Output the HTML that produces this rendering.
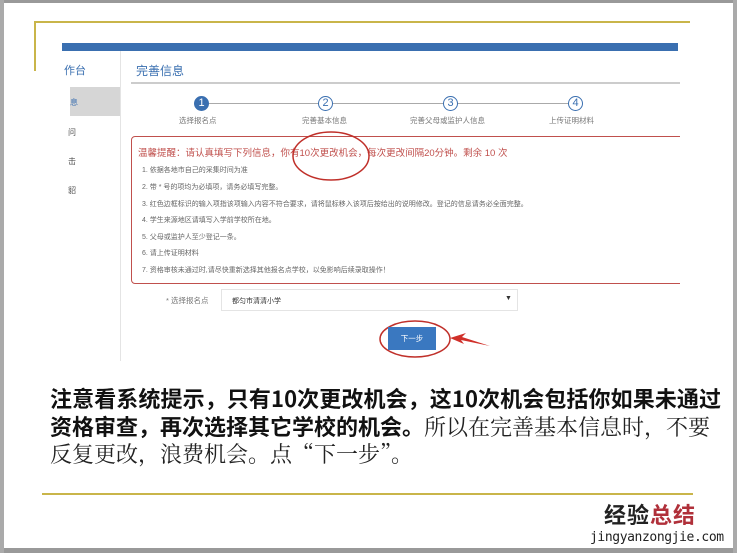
<!DOCTYPE html>
<html><head><meta charset="utf-8"><style>
*{margin:0;padding:0;box-sizing:border-box}
body{width:737px;height:553px;position:relative;background:#fff;overflow:hidden;font-family:"Liberation Sans","Noto Sans CJK SC",sans-serif}
.a{position:absolute}
.s{font-size:7px;color:#666;white-space:nowrap}
.c{width:15px;height:15px;border-radius:50%;border:1px solid #3a6fb0;color:#3a6fb0;font-size:11px;line-height:13px;text-align:center;background:#fff}
.l{font-size:7.5px;color:#777;white-space:nowrap}
.t{font-size:22px;line-height:28px;white-space:nowrap;color:#111}
</style></head><body>
<div class="a" style="left:0;top:0;width:737px;height:3px;background:#999"></div>
<div class="a" style="left:0;top:548px;width:737px;height:5px;background:#999"></div>
<div class="a" style="left:0;top:0;width:4px;height:553px;background:#aaa"></div>
<div class="a" style="left:733px;top:0;width:4px;height:553px;background:#aaa"></div>
<div class="a" style="left:34px;top:21px;width:656px;height:2px;background:#c9b54a"></div>
<div class="a" style="left:34px;top:21px;width:2px;height:50px;background:#c9b54a"></div>

<div class="a" style="left:62px;top:43px;width:616px;height:8px;background:#3a6fb0"></div>
<div class="a" style="left:120px;top:51px;width:1px;height:310px;background:#e4e4e4"></div>
<div class="a" style="left:70px;top:87px;width:50px;height:29px;background:#d6d6d6"></div>
<div class="a" style="left:64px;top:62px;font-size:11px;color:#3a6fb0">作台</div>
<div class="a" style="left:70px;top:97px;font-size:8px;color:#3a6fb0">息</div>
<div class="a" style="left:68px;top:127px;font-size:8px;color:#555">问</div>
<div class="a" style="left:68px;top:156px;font-size:8px;color:#555">击</div>
<div class="a" style="left:68px;top:185px;font-size:8px;color:#555">貂</div>
<div class="a" style="left:136px;top:62px;font-size:12px;color:#3a6fb0">完善信息</div>
<div class="a" style="left:131px;top:82px;width:549px;height:2px;background:#ccc"></div>

<div class="a" style="left:201px;top:103px;width:375px;height:1px;background:#aaa"></div>
<div class="a c" style="left:194px;top:96px;background:#3a6fb0;color:#fff">1</div>
<div class="a c" style="left:318px;top:96px">2</div>
<div class="a c" style="left:443px;top:96px">3</div>
<div class="a c" style="left:568px;top:96px">4</div>
<div class="a l" style="left:179px;top:115px">选择报名点</div>
<div class="a l" style="left:302px;top:115px">完善基本信息</div>
<div class="a l" style="left:410px;top:115px">完善父母或监护人信息</div>
<div class="a l" style="left:549px;top:115px">上传证明材料</div>

<div class="a" style="left:131px;top:136px;width:560px;height:148px;border:1px solid #c0504d;border-radius:4px"></div>
<div class="a" style="left:680px;top:130px;width:20px;height:160px;background:#fff"></div>
<div class="a" style="left:138px;top:145px;font-size:9.5px;color:#c0504d;white-space:nowrap">温馨提醒：请认真填写下列信息，你有10次更改机会，每次更改间隔20分钟。剩余 10 次</div>
<div class="a s" style="left:142px;top:165px">1. 依据各地市自己的采集时间为准</div>
<div class="a s" style="left:142px;top:182px">2. 带 * 号的项均为必填项，请务必填写完整。</div>
<div class="a s" style="left:142px;top:199px">3. 红色边框标识的输入项指该项输入内容不符合要求，请将鼠标移入该项后按给出的说明修改。登记的信息请务必全面完整。</div>
<div class="a s" style="left:142px;top:215px">4. 学生来源地区请填写入学前学校所在地。</div>
<div class="a s" style="left:142px;top:232px">5. 父母或监护人至少登记一条。</div>
<div class="a s" style="left:142px;top:248px">6. 请上传证明材料</div>
<div class="a s" style="left:142px;top:265px">7. 资格审核未通过时,请尽快重新选择其他报名点学校，以免影响后续录取操作！</div>
<svg class="a" style="left:0;top:0" width="737" height="553">
<ellipse cx="331" cy="156" rx="38" ry="24" fill="none" stroke="#c0302a" stroke-width="1.5"/>
<ellipse cx="415" cy="339" rx="35" ry="18" fill="none" stroke="#c0302a" stroke-width="1.5"/>
<polygon points="450,338 466,333 462,337 490,346 461,340 464,344" fill="#d0302a"/>
</svg>
<div class="a" style="left:166px;top:295px;font-size:7.5px;color:#777">* 选择报名点</div>
<div class="a" style="left:221px;top:289px;width:297px;height:22px;border:1px solid #e4e4e4"></div>
<div class="a" style="left:232px;top:296px;font-size:7px;color:#333">都匀市清清小学</div>
<div class="a" style="left:505px;top:295px;font-size:7px;color:#333">▼</div>
<div class="a" style="left:388px;top:327px;width:48px;height:23px;background:#3a78c0;color:#fff;font-size:7.5px;text-align:center;line-height:23px">下一步</div>

<div class="a t" style="left:50px;top:384px;font-weight:bold;font-family:'Noto Sans CJK SC','Liberation Sans',sans-serif;letter-spacing:0.1px;line-height:28px">注意看系统提示，只有10次更改机会，这10次机会包括你如果未通过</div>
<div class="a t" style="left:50px;top:412px;font-family:'Noto Sans CJK SC',sans-serif"><b>资格审查，再次选择其它学校的机会。</b><span style="font-family:'Noto Serif CJK SC',serif;color:#222">所以在完善基本信息时，不要</span></div>
<div class="a t" style="left:50px;top:440px;font-family:'Noto Serif CJK SC',serif;color:#222">反复更改，浪费机会。点“下一步”。</div>

<div class="a" style="left:42px;top:493px;width:651px;height:2px;background:#c9b54a"></div>
<div class="a" style="left:604px;top:503px;font-size:22px;font-weight:bold;letter-spacing:1px;white-space:nowrap;line-height:26px"><span style="color:#222">经验</span><span style="color:#b0303a">总结</span></div>
<div class="a" style="left:590px;top:530px;font-size:13px;font-family:'DejaVu Sans Mono',monospace;color:#222;white-space:nowrap;letter-spacing:-0.4px">jingyanzongjie.com</div>
</body></html>
